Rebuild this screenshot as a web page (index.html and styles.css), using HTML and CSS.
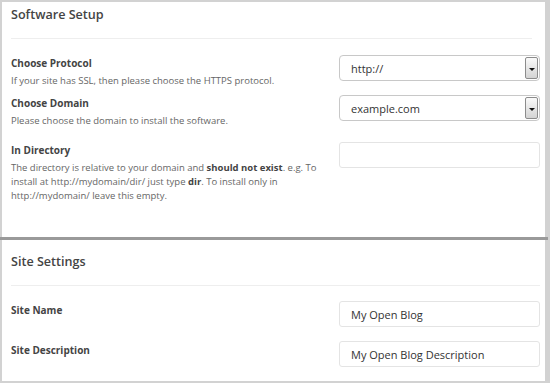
FILE: index.html
```html
<!DOCTYPE html>
<html lang="en">
<head>
    <meta charset="UTF-8">
    <title>Software Setup</title>
    <meta name="viewport" content="width=device-width">
    <link rel="stylesheet" href="styles.css">
</head>
<body>
    <div class="frame">
        <section class="panel panel-software">
            <h2 class="panel-title">Software Setup</h2>

            <div class="form-row">
                <div class="form-text">
                    <label for="input-protocol">Choose Protocol</label>
                    <p class="form-desc">If your site has SSL, then please choose the HTTPS protocol.</p>
                </div>
                <div class="select-box">
                    <select id="input-protocol">
                        <option>http://</option>
                        <option>https://</option>
                    </select>
                    <span class="select-btn"></span>
                </div>
            </div>

            <div class="form-row">
                <div class="form-text">
                    <label for="input-domain">Choose Domain</label>
                    <p class="form-desc">Please choose the domain to install the software.</p>
                </div>
                <div class="select-box">
                    <select id="input-domain">
                        <option>example.com</option>
                    </select>
                    <span class="select-btn"></span>
                </div>
            </div>

            <div class="form-row form-row-dir">
                <div class="form-text">
                    <label for="input-dir">In Directory</label>
                    <p class="form-desc form-desc-long">The directory is relative to your domain and <b>should not exist</b>. e.g. To install at http://mydomain/dir/ just type <b>dir</b>. To install only in http://mydomain/ leave this empty.</p>
                </div>
                <input type="text" id="input-dir" class="text-input">
            </div>
        </section>

        <section class="panel panel-site">
            <h2 class="panel-title">Site Settings</h2>

            <div class="form-row form-row-site">
                <label for="input-name">Site Name</label>
                <input type="text" id="input-name" class="text-input" value="My Open Blog">
            </div>
            <div class="form-row form-row-site">
                <label for="input-desc">Site Description</label>
                <input type="text" id="input-desc" class="text-input" value="My Open Blog Description">
            </div>
        </section>
    </div>
</body>
</html>
```

FILE: styles.css
```css
*,
*::after,
*::before{
    padding: 0;
    margin: 0;
    box-sizing: border-box;
}
html{
    font: normal 11px/1.5 "Open Sans", sans-serif;
    color: #444;
}
body{
    width: 550px;
    height: 383px;
    overflow: hidden;
}
.frame{
    height: 383px;
    background: #fff;
    border-style: solid;
    border-color: #d2d2d2;
    border-width: 2px 5px 2px 2px;
}
.panel{
    padding: 0 5px 0 9px;
}
.panel-software{
    height: 235px;
}
.panel-site{
    border-top: 3px solid #9a9a9a;
    margin-left: -2px;
    margin-right: -3px;
    padding: 9px 8px 0 11px;
}
.panel-title{
    font-size: 12.6px;
    font-weight: 600;
    color: #444;
    line-height: 26px;
    border-bottom: 1px solid #eee;
    padding-bottom: 10px;
    margin-right: 8px;
}
.form-row{
    display: flex;
    justify-content: space-between;
    align-items: flex-start;
}
.form-row label{
    display: block;
    font-size: 10px;
    font-weight: 700;
    color: #444;
    line-height: 18px;
}
.form-desc{
    font-size: 9.5px;
    color: #666;
    line-height: 18px;
}
.form-desc b{
    color: #444;
}
.form-desc-long{
    width: 318px;
    line-height: 14px;
    padding-top: 2px;
}
.panel-software .form-row:first-of-type{
    margin-top: 15px;
}
.panel-software .form-row + .form-row{
    margin-top: 4px;
}
.panel-software .form-row-dir{
    margin-top: 11px !important;
}
.select-box{
    margin-top: 1px;
    width: 201px;
    height: 26px;
    display: flex;
    border: 1px solid #c8c8c8;
    border-radius: 4px;
    overflow: hidden;
    background: #fff;
}
.select-box select{
    flex: 1;
    appearance: none;
    -webkit-appearance: none;
    border: none;
    outline: none;
    background: transparent;
    font: 11px "Open Sans", sans-serif;
    color: #333;
    padding-left: 11px;
}
.select-btn{
    width: 13px;
    margin: 1px 1px 1px 0;
    border: 1px solid #8c8c8c;
    border-radius: 2px;
    background: linear-gradient(#fafafa, #d4d4d4);
    position: relative;
}
.select-btn::after{
    content: "";
    position: absolute;
    left: 3px;
    top: 10px;
    border-left: 3px solid transparent;
    border-right: 3px solid transparent;
    border-top: 3px solid #111;
}
.text-input{
    width: 201px;
    height: 26px;
    border: 1px solid #e4e4e4;
    border-radius: 3px;
    font: 11px "Open Sans", sans-serif;
    color: #333;
    padding-left: 11px;
    outline: none;
}
.form-row-dir .text-input{
    margin-top: 1px;
}
.panel-site .panel-title{
    margin-right: 0;
}
.panel-site .form-row-site:first-of-type{
    margin-top: 15px;
}
.panel-site .form-row-site + .form-row-site{
    margin-top: 14px;
}
```
